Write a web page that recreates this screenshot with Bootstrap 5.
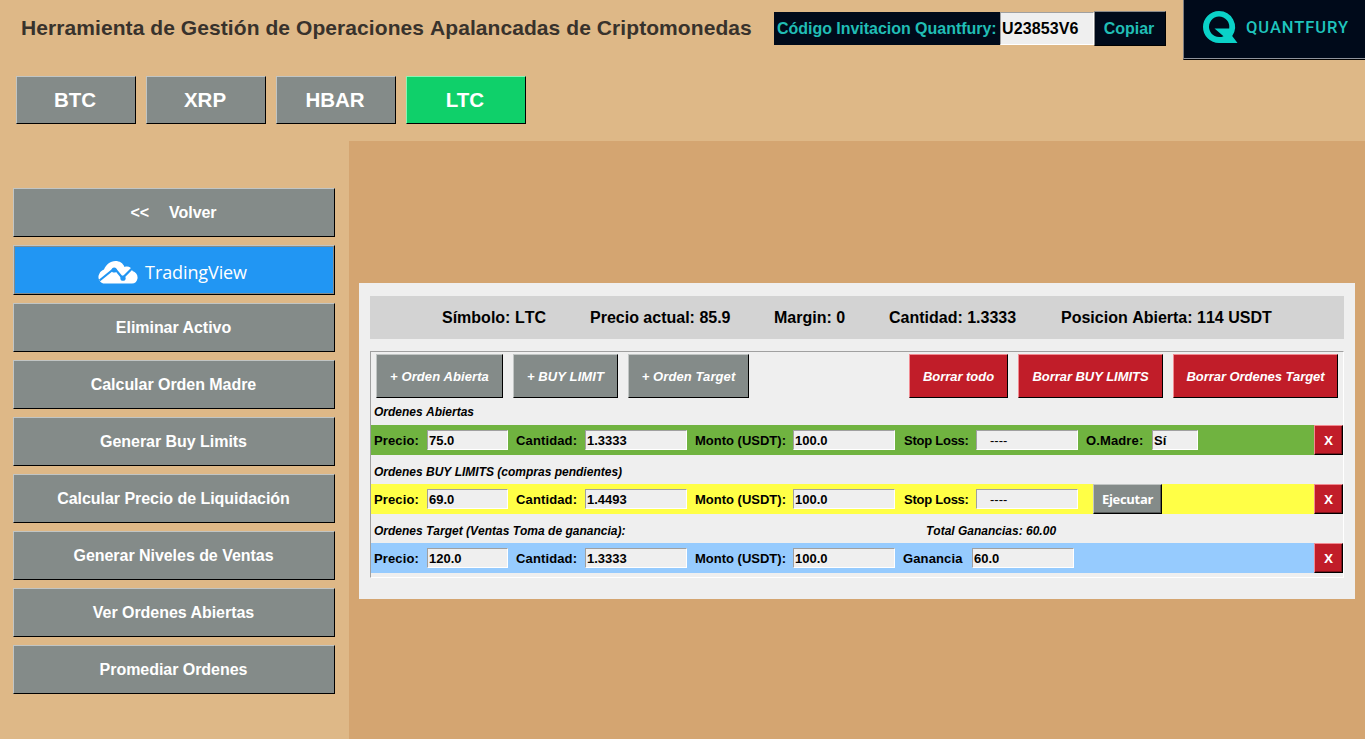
<!DOCTYPE html>
<html lang="es">
<head>
<meta charset="utf-8">
<meta name="viewport" content="width=device-width, initial-scale=1">
<title>Herramienta de Gestión de Operaciones</title>
<link href="https://cdn.jsdelivr.net/npm/bootstrap@5.3.0/dist/css/bootstrap.min.css" rel="stylesheet">
<style>
  :root { --steel: #848b89; --steel-hi: #c1c5c4; --face: #efefef; --navy: #000a1a; --teal: #20bdb5; }
  html, body { height: 100%; }
  body { background: #deb887; font-family: "Liberation Sans", Arial, sans-serif; font-weight: 700; font-size: 16px;
         color: #000; font-kerning: none; overflow: hidden; line-height: 1.2; white-space: nowrap; }
  .topbar { height: 60px; padding-left: 21px; }
  .app-title { width: 753px; padding-top: 16px; font-size: 21px; font-weight: 700; letter-spacing: .075px; color: #38322c; line-height: 24px; margin: 0; }
  .invite { padding-top: 11px; width: 409px; }
  .invite-label { width: 226px; height: 33px; background: var(--navy); color: var(--teal); padding-left: 3px; line-height: 33px; margin-top: 1px; letter-spacing: -.03px; }
  .invite-code { width: 94px; height: 33px; background: var(--face); padding-left: 1px; line-height: 31px; margin-top: 1px;
                 border: 1px solid #a0a0a0; border-right-color: #fff; border-bottom-color: #fff; letter-spacing: .1px; }
  .btn-face { border-radius: 0; border: 1px solid; padding: 0; font-weight: 700; color: #fff; display: flex; align-items: center; justify-content: center; line-height: 1; }
  .btn-steel, .btn-steel:hover { background: var(--steel); color: #fff; border-color: var(--steel-hi) #000 #000 var(--steel-hi); }
  .btn-green, .btn-green:hover { background: #0fd06a; color: #fff; border-color: #8af5b4 #000 #000 #8af5b4; }
  .btn-red, .btn-red:hover { background: #c11d29; color: #fff; border-color: #f28b92 #000 #000 #f28b92; }
  .btn-copy, .btn-copy:hover { background: var(--navy); color: var(--teal); width: 72px; height: 35px; padding-right: 2px; border-color: #8a8a8a #000 #000 #8a8a8a; }
  .brand-box { width: 182px; height: 60px; background: var(--navy); border-left: 1px solid #7c7d80; border-bottom: 1px solid #000; box-shadow: inset 0 -1px #8f949c; padding-left: 18px; }
  .brand-name { font: 500 16.5px/20px Roboto, sans-serif; letter-spacing: .95px; color: #1fc4bd; margin: 18px 0 0 8px; }
  .tabs { height: 81px; padding: 16px 16px 0; gap: 10px; }
  .tabs .btn { width: 120px; height: 48px; font-size: 20.5px; padding-right: 2px; }
  .workspace { height: 598px; }
  .side { width: 349px; padding: 47px 14px 0 13px; gap: 8px; }
  .side .btn { height: 49px; font-size: 16px; letter-spacing: -.04px; padding-right: 1px; flex: none; }
  .side .btn-tv { height: 50px; background: #2196f3; box-shadow: inset 0 0 0 1px #848b89; gap: 7px; padding: 3px 3px 0 0; }
  .btn-tv span { font: 400 18px/24px "Open Sans", sans-serif; letter-spacing: -.1px; }
  .stage { background: #d4a571; padding: 142px 10px 0; }
  .panel { background: var(--face); height: 316px; padding: 13px 11px 0; }
  .info { height: 43px; background: #d3d3d3; padding-left: 72px; line-height: 43px; display: grid; grid-template-columns: 148px 184px 115px 172px 1fr; }
  .book { margin-top: 12px; height: 227px; border: 1px solid; border-color: #a0a0a0 #fff #fff #a0a0a0; }
  .tools { padding: 2px 5px 0; gap: 10px; }
  .tools .btn { height: 44px; font-size: 13px; font-style: italic; letter-spacing: .1px; }
  .tools .btn-red { letter-spacing: -.04px; }
  .w99 { width: 99px; } .w105 { width: 105px; } .w121 { width: 121px; } .w127 { width: 127px; } .w145 { width: 145px; } .w165 { width: 165px; }
  .caption-line { font-size: 12px; font-style: italic; height: 29px; line-height: 34px; padding-left: 3px; display: flex; }
  .caption-line.first { height: 27px; line-height: 29px; }
  .caption-line span:first-child { width: 552px; }
  .order { height: 30px; font-size: 13px; display: grid; align-items: center; padding-left: 3px;
           grid-template-columns: 53px 81px 8px 69px 102px 8px 98px 102px 9px 72px 102px 8px 66px 46px 1fr 29px; }
  .order.gain { grid-template-columns: 53px 81px 8px 69px 102px 8px 98px 102px 8px 69px 102px 1fr 29px; }
  .order.pending { grid-template-columns: 53px 81px 8px 69px 102px 8px 98px 102px 9px 72px 102px 15px 69px 1fr 29px; }
  .field-name { padding-top: 1px; }
  .spaced { letter-spacing: .13px; }
  .tight { letter-spacing: -.25px; }
  .order .btn { height: 30px; font: 700 13px/1 "Open Sans", sans-serif; letter-spacing: -.3px; box-shadow: inset -1px -1px rgba(0,0,0,.35); }
  .green { background: #70b340; } .yellow { background: #ffff46; } .blue { background: #96cbfe; }
  .entry { height: 20px; line-height: 19px; background: var(--face); border: 1px solid; border-color: #a0a0a0 #fff #fff #a0a0a0; padding-left: 1px; }
  .entry.dash { padding-left: 13px; font-weight: 400; line-height: 20px; }
</style>
</head>
<body>
<header class="topbar d-flex align-items-start">
  <h1 class="app-title">Herramienta de Gestión de Operaciones Apalancadas de Criptomonedas</h1>
  <div class="invite d-flex align-items-start">
    <div class="invite-label">Código Invitacion Quantfury:</div>
    <div class="invite-code">U23853V6</div>
    <button class="btn btn-face btn-copy">Copiar</button>
  </div>
  <div class="brand-box d-flex align-items-start flex-shrink-0">
    <svg width="36" height="34" viewBox="0 0 36 34" style="margin-top:10px" aria-hidden="true">
      <path fill="#0ad2c8" fill-rule="evenodd" d="M17 1A16 16 0 0 0 17 33H35.500L30.200 26A16 16 0 0 0 17 1ZM17 6.500A10.300 10.300 0 0 1 27.200 18.600H12.500L21.500 26.200A10.300 10.300 0 1 1 17 6.500Z"/>
    </svg>
    <span class="brand-name">QUANTFURY</span>
  </div>
</header>
<nav class="tabs d-flex">
  <button class="btn btn-face btn-steel">BTC</button>
  <button class="btn btn-face btn-steel">XRP</button>
  <button class="btn btn-face btn-steel">HBAR</button>
  <button class="btn btn-face btn-green">LTC</button>
</nav>
<div class="workspace d-flex">
  <aside class="side d-flex flex-column flex-shrink-0">
    <button class="btn btn-face btn-steel"><span style="margin-right:20px">&lt;&lt;</span><span>Volver</span></button>
    <button class="btn btn-face btn-steel btn-tv">
      <svg width="40" height="24" viewBox="0 0 40 24" aria-hidden="true">
        <path fill="#fff" d="M7 23.500A6.500 6.500 0 0 1 1.500 13.500C2 11.500 4 10.500 6 9.500C8 5 12 1 17.500 1C21.500 1 25 3 26.500 7C30 5.500 34 7.500 34.500 11C38 12 40 15 39.500 18.500C39 21.500 37 23.500 34 23.500Z"/>
        <path fill="none" stroke="#2196f3" stroke-width="2.200" d="M1.500 20.500L14.500 10H18L24.500 18L36 6.500"/>
        <circle cx="16.200" cy="10" r="2.600" fill="#2196f3"/><circle cx="25" cy="18.200" r="2.600" fill="#2196f3"/>
      </svg>
      <span>TradingView</span>
    </button>
    <button class="btn btn-face btn-steel">Eliminar Activo</button>
    <button class="btn btn-face btn-steel">Calcular Orden Madre</button>
    <button class="btn btn-face btn-steel">Generar Buy Limits</button>
    <button class="btn btn-face btn-steel">Calcular Precio de Liquidación</button>
    <button class="btn btn-face btn-steel">Generar Niveles de Ventas</button>
    <button class="btn btn-face btn-steel">Ver Ordenes Abiertas</button>
    <button class="btn btn-face btn-steel">Promediar Ordenes</button>
  </aside>
  <main class="stage flex-grow-1">
    <section class="panel">
      <div class="info">
        <span>Símbolo: LTC</span><span>Precio actual: 85.9</span><span>Margin: 0</span><span>Cantidad: 1.3333</span><span>Posicion Abierta: 114 USDT</span>
      </div>
      <div class="book">
        <div class="tools d-flex">
          <button class="btn btn-face btn-steel w127">+ Orden Abierta</button>
          <button class="btn btn-face btn-steel w105">+ BUY LIMIT</button>
          <button class="btn btn-face btn-steel w121">+ Orden Target</button>
          <button class="btn btn-face btn-red w99 ms-auto">Borrar todo</button>
          <button class="btn btn-face btn-red w145">Borrar BUY LIMITS</button>
          <button class="btn btn-face btn-red w165">Borrar Ordenes Target</button>
        </div>
        <div class="caption-line first"><span>Ordenes Abiertas</span></div>
        <div class="order green">
          <span class="field-name spaced">Precio:</span><span class="entry">75.0</span><i></i>
          <span class="field-name spaced">Cantidad:</span><span class="entry">1.3333</span><i></i>
          <span class="field-name">Monto (USDT):</span><span class="entry">100.0</span><i></i>
          <span class="field-name tight">Stop Loss:</span><span class="entry dash">----</span><i></i>
          <span class="field-name spaced">O.Madre:</span><span class="entry">Sí</span><i></i>
          <button class="btn btn-face btn-red">X</button>
        </div>
        <div class="caption-line"><span>Ordenes BUY LIMITS (compras pendientes)</span></div>
        <div class="order pending yellow">
          <span class="field-name spaced">Precio:</span><span class="entry">69.0</span><i></i>
          <span class="field-name spaced">Cantidad:</span><span class="entry">1.4493</span><i></i>
          <span class="field-name">Monto (USDT):</span><span class="entry">100.0</span><i></i>
          <span class="field-name tight">Stop Loss:</span><span class="entry dash">----</span><i></i>
          <button class="btn btn-face btn-steel">Ejecutar</button><i></i>
          <button class="btn btn-face btn-red">X</button>
        </div>
        <div class="caption-line"><span>Ordenes Target (Ventas Toma de ganancia):</span><span>Total Ganancias: 60.00</span></div>
        <div class="order gain blue">
          <span class="field-name spaced">Precio:</span><span class="entry">120.0</span><i></i>
          <span class="field-name spaced">Cantidad:</span><span class="entry">1.3333</span><i></i>
          <span class="field-name">Monto (USDT):</span><span class="entry">100.0</span><i></i>
          <span class="field-name spaced">Ganancia</span><span class="entry">60.0</span><i></i>
          <button class="btn btn-face btn-red">X</button>
        </div>
      </div>
    </section>
  </main>
</div>
<script src="https://cdn.jsdelivr.net/npm/bootstrap@5.3.0/dist/js/bootstrap.bundle.min.js"></script>
</body>
</html>
